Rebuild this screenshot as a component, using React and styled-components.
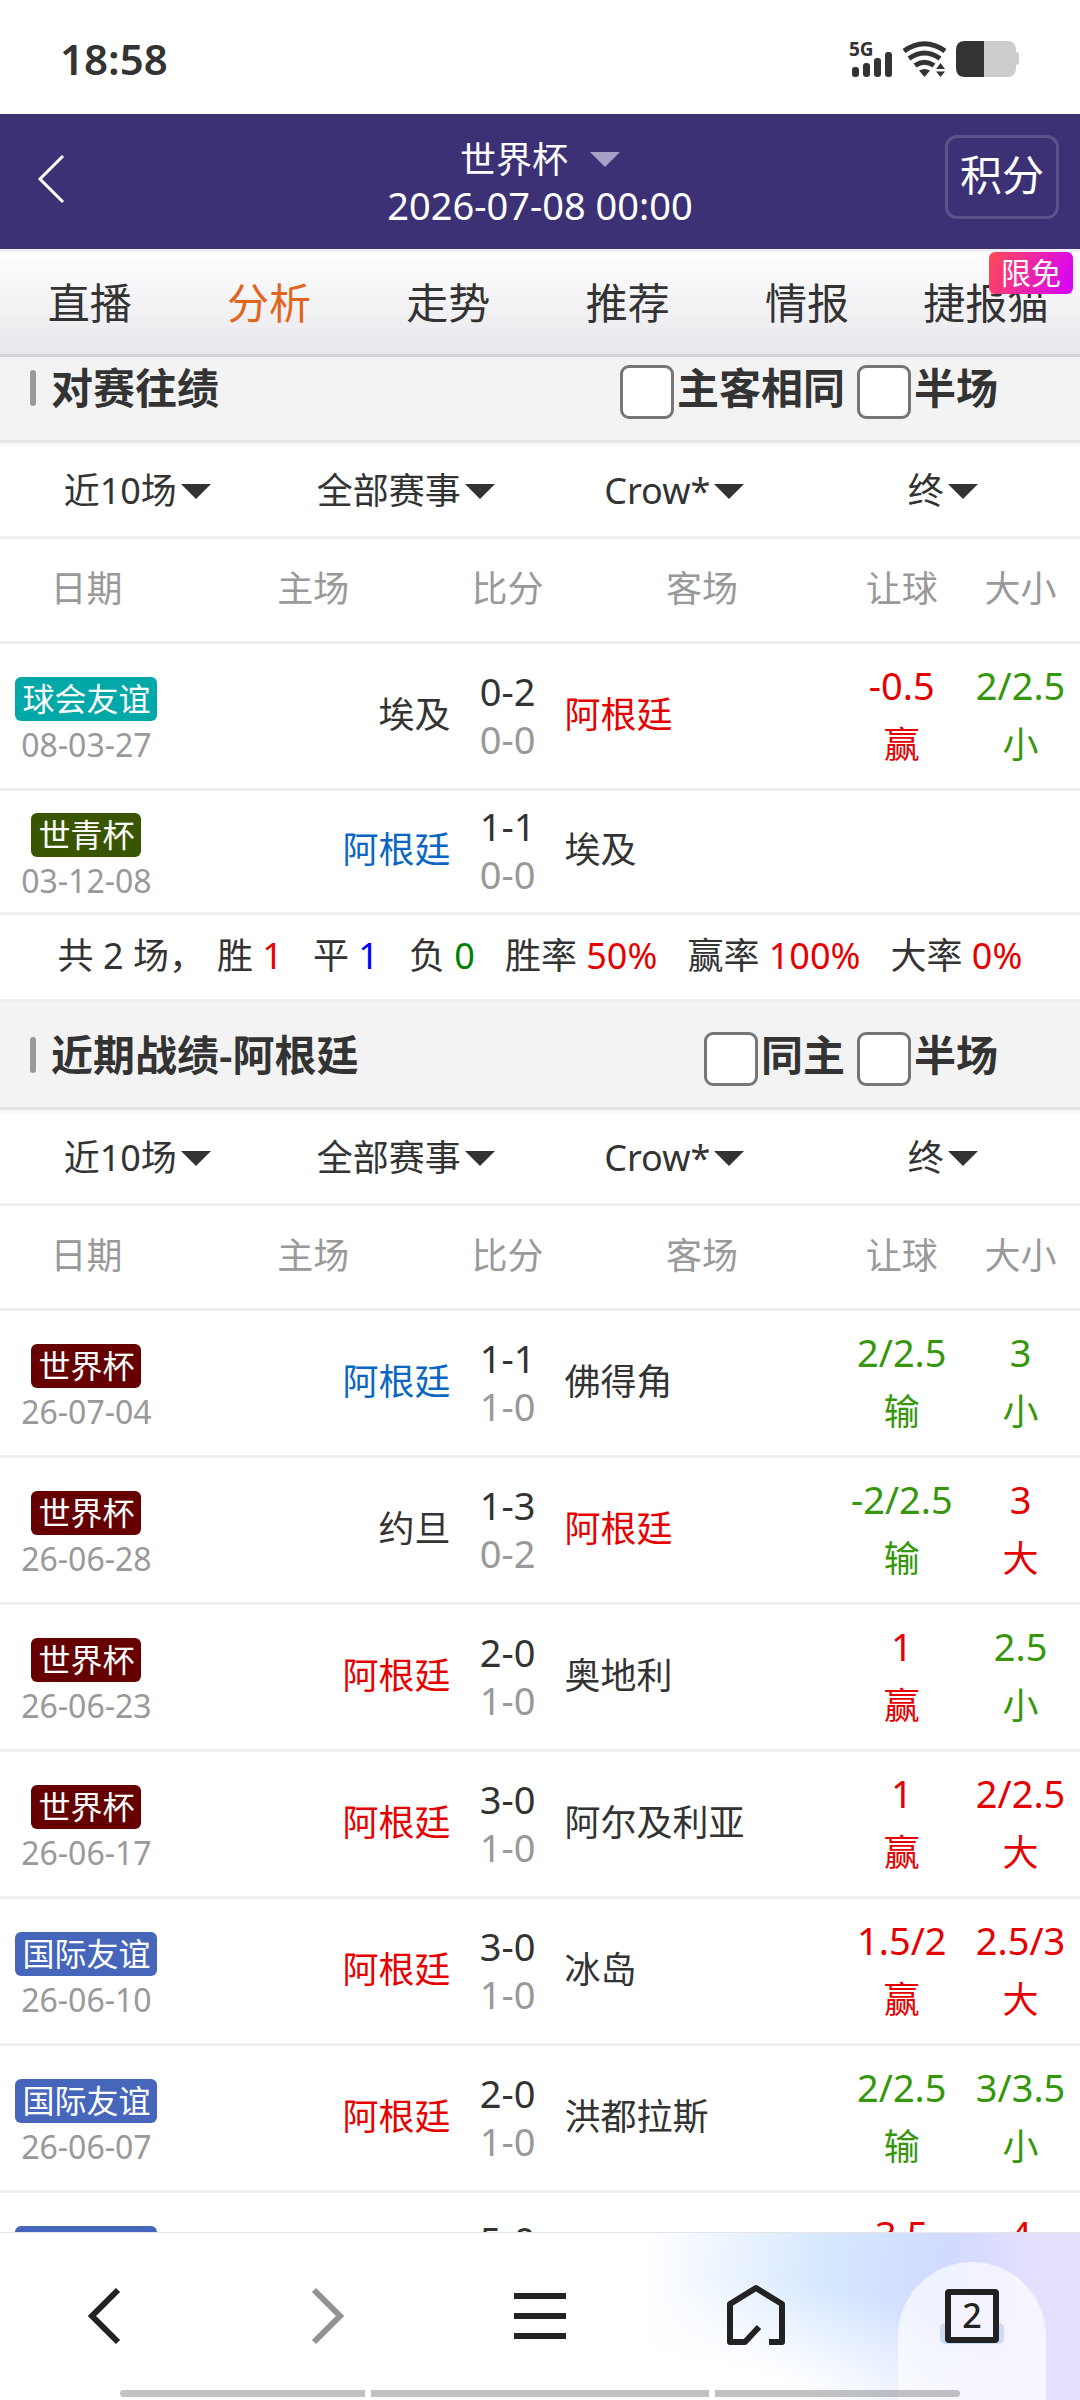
import { Fragment, useState } from "react";
import styled, { createGlobalStyle } from "styled-components";

const GlobalStyle = createGlobalStyle`
  * {
    box-sizing: border-box;
  }
  body {
    margin: 0;
    background-color: white;
    color: #333;
    font-family: "Noto Sans", "Noto Sans CJK SC", sans-serif;
    font-size: 36px;
    line-height: 48px;
  }
  button, select, input {
    margin: 0;
    padding: 0;
    border: none;
    background: none;
    color: inherit;
    font: inherit;
  }
`;

const Page = styled.div`
  height: 100vh;
  display: flex;
  flex-direction: column;
  overflow: hidden;
`;

const StatusBar = styled.div`
  flex: none;
  height: 114px;
  padding: 4px 60px 0px;
  display: flex;
  align-items: center;
  justify-content: space-between;
`;

const Clock = styled.span`
  font-size: 42px;
  font-weight: 600;
`;

const Header = styled.header`
  flex: none;
  height: 135px;
  padding: 0px 21px;
  display: grid;
  grid-template-columns: 1fr auto 1fr;
  align-items: center;
  background-color: #3d3175;
  color: white;
`;

const Back = styled.button`
  display: flex;
  padding: 0px 0px 6px 15px;
`;

const Heading = styled.div`
  padding-top: 2px;
  display: flex;
  flex-direction: column;
  align-items: center;
`;

const League = styled.button`
  display: flex;
  align-items: center;
  gap: 22px;
  line-height: 44px;
`;

const Kickoff = styled.span`
  font-size: 38px;
  line-height: 46px;
`;

const Arrow = styled.i`
  border-left: 15px solid transparent;
  border-right: 15px solid transparent;
  border-top: 15px solid ${(props) => props.$color || "#333"};
`;

const Points = styled.button`
  justify-self: end;
  width: 114px;
  height: 84px;
  margin-bottom: 10px;
  padding-bottom: 4px;
  border: 3px solid rgba(255, 255, 255, 0.16);
  border-radius: 12px;
  font-size: 42px;
  line-height: 60px;
`;

const Tabs = styled.nav`
  flex: none;
  height: 108px;
  padding-right: 4px;
  display: flex;
  border-top: 3px solid #efecf7;
  border-bottom: 3px solid #d3d3d8;
  background: linear-gradient(#fefefe, #e8e7ec);
`;

const Tab = styled.a`
  flex: 1;
  position: relative;
  text-align: center;
  text-decoration: none;
  white-space: nowrap;
  font-size: 42px;
  line-height: 102px;
  color: ${(props) => (props.$active ? "#e0661f" : "#333")};
`;

const Free = styled.span`
  position: absolute;
  top: 0px;
  right: 3px;
  width: 84px;
  border-radius: 6px;
  background: linear-gradient(110deg, #ff4a55, #d600ff);
  color: white;
  font-size: 30px;
  line-height: 42px;
`;

const Content = styled.main`
  flex: 1;
  min-height: 0;
  overflow-y: auto;
  scrollbar-width: none;
`;

const SectionHead = styled.div`
  padding: ${(props) => (props.$scrolled ? "8px" : "30px")} 82px 21px 30px;
  display: flex;
  align-items: flex-start;
  gap: 12px;
  border-bottom: 3px solid #e5e5e5;
  background-color: #f3f3f3;
  font-size: 42px;
  font-weight: 600;
  line-height: 46px;
`;

const Title = styled.h2`
  flex: 1;
  margin: 0px;
  display: flex;
  align-items: center;
  gap: 15px;
  font-size: inherit;
  font-weight: inherit;
  &::before {
    content: "";
    width: 6px;
    height: 36px;
    border-radius: 3px;
    background-color: #999;
  }
`;

const Check = styled.label`
  display: flex;
  gap: 3px;
`;

const Box = styled.input`
  appearance: none;
  width: 54px;
  height: 54px;
  border: 3px solid #767676;
  border-radius: 9px;
  background-color: white;
  &:checked {
    background-color: #3d3175;
  }
`;

const Filters = styled.div`
  height: 96px;
  padding: 0px 3px;
  display: flex;
  border-top: 3px solid #f9f9f9;
  border-bottom: 3px solid #eee;
`;

const Filter = styled.label`
  flex: 1;
  display: flex;
  align-items: center;
  justify-content: center;
  gap: 4px;
`;

const Select = styled.select`
  appearance: none;
  field-sizing: content;
  line-height: 48px;
`;

const Table = styled.table`
  width: 100%;
  table-layout: fixed;
  border-spacing: 0px;
`;

const Row = styled.tr`
  height: ${(props) => props.$height || 147}px;
`;

const Th = styled.th`
  width: ${(props) => props.$width};
  padding: 0px 0px 3px;
  border-bottom: 3px solid #eee;
  color: #999;
  font-weight: normal;
`;

const Td = styled.td`
  padding: 0px 3px 3px;
  border-bottom: 3px solid #eee;
  text-align: ${(props) => props.$align || "center"};
  white-space: nowrap;
`;

const DateCell = styled(Td)`
  padding: 14px 3px 0px;
  color: #999;
  font-size: 32px;
`;

const Tag = styled.span`
  display: block;
  width: fit-content;
  margin: 0px auto;
  padding: 0px 7px;
  border-radius: 6px;
  background-color: ${(props) => props.$color};
  color: white;
  line-height: 44px;
`;

const Team = styled.span`
  color: ${(props) => props.$color};
`;

const Score = styled.div`
  font-size: 38px;
  color: ${(props) => (props.$half ? "#999" : "#333")};
`;

const Odds = styled.div`
  line-height: 60px;
  color: ${(props) => props.$color};
`;

const Line = styled.div`
  font-size: 38px;
`;

const Summary = styled.div`
  height: 87px;
  padding-bottom: 3px;
  display: flex;
  align-items: center;
  justify-content: center;
  gap: 30px;
  border-bottom: 3px solid #eee;
  white-space: nowrap;
`;

// the full-width comma already carries its own space
const Total = styled.span`
  margin-right: -18px;
`;

const Value = styled.span`
  color: ${(props) => props.$color};
`;

const Toolbar = styled.nav`
  flex: none;
  position: relative;
  height: 168px;
  display: flex;
  border-top: 1px solid #e5e5e5;
  background:
    radial-gradient(ellipse 36% 90% at 62% 115%, white 40%, transparent),
    linear-gradient(95deg, white 59%, #d5e7ff 76%, #d1daff 87%, #e6dfff 95%);
`;

const Tool = styled.button`
  flex: 1;
  display: flex;
  align-items: flex-end;
  justify-content: center;
`;

const Windows = styled.span`
  display: flex;
  width: 148px;
  height: 138px;
  border-radius: 74px 74px 0px 0px;
  background-color: rgba(255, 255, 255, 0.65);
`;

const Gesture = styled.div`
  position: absolute;
  bottom: 3px;
  left: 0px;
  right: 0px;
  height: 7px;
  padding: 0px 120px;
  display: flex;
  gap: 6px;
`;

const Segment = styled.i`
  flex: ${(props) => props.$grow};
  border-radius: ${(props) => props.$radius || "0px"};
  background-color: rgba(150, 150, 150, 0.58);
`;

const RED = "#e60000";
const GREEN = "#36960c";
const BLUE = "#0a66c2";

const tabs = ["直播", "分析", "走势", "推荐", "情报", "捷报猫"];

const filters = [
  ["场次", ["近10场", "近20场"]],
  ["赛事", ["全部赛事", "相同赛事"]],
  ["公司", ["Crow*", "Bet*"]],
  ["盘口", ["终", "初"]],
];

const columns = [
  ["日期", "16%"],
  ["主场", "26%"],
  ["比分", "10%"],
  ["客场", "26%"],
  ["让球", "11%"],
  ["大小", "11%"],
];

const meetings = [
  { tag: "球会友谊", bg: "#00a8a8", date: "08-03-27", home: "埃及", full: "0-2", half: "0-0", away: "阿根廷", awayColor: RED, odds: [["-0.5", "赢", RED], ["2/2.5", "小", GREEN]] },
  { tag: "世青杯", bg: "#3a5500", date: "03-12-08", home: "阿根廷", homeColor: BLUE, full: "1-1", half: "0-0", away: "埃及", height: 124 },
];

const recent = [
  { tag: "世界杯", bg: "#660000", date: "26-07-04", home: "阿根廷", homeColor: BLUE, full: "1-1", half: "1-0", away: "佛得角", odds: [["2/2.5", "输", GREEN], ["3", "小", GREEN]] },
  { tag: "世界杯", bg: "#660000", date: "26-06-28", home: "约旦", full: "1-3", half: "0-2", away: "阿根廷", awayColor: RED, odds: [["-2/2.5", "输", GREEN], ["3", "大", RED]] },
  { tag: "世界杯", bg: "#660000", date: "26-06-23", home: "阿根廷", homeColor: RED, full: "2-0", half: "1-0", away: "奥地利", odds: [["1", "赢", RED], ["2.5", "小", GREEN]] },
  { tag: "世界杯", bg: "#660000", date: "26-06-17", home: "阿根廷", homeColor: RED, full: "3-0", half: "1-0", away: "阿尔及利亚", odds: [["1", "赢", RED], ["2/2.5", "大", RED]] },
  { tag: "国际友谊", bg: "#4666bb", date: "26-06-10", home: "阿根廷", homeColor: RED, full: "3-0", half: "1-0", away: "冰岛", odds: [["1.5/2", "赢", RED], ["2.5/3", "大", RED]] },
  { tag: "国际友谊", bg: "#4666bb", date: "26-06-07", home: "阿根廷", homeColor: RED, full: "2-0", half: "1-0", away: "洪都拉斯", odds: [["2/2.5", "输", GREEN], ["3/3.5", "小", GREEN]] },
  { tag: "国际友谊", bg: "#4666bb", date: "26-04-01", home: "阿根廷", homeColor: RED, full: "5-0", half: "2-0", away: "赞比亚", odds: [["3.5", "赢", RED], ["4", "大", RED]] },
];

const summary = [
  ["胜", "1", RED],
  ["平", "1", "#0000ff"],
  ["负", "0", "#008000"],
  ["胜率", "50%", RED],
  ["赢率", "100%", RED],
  ["大率", "0%", RED],
];

const StatusIcons = () => (
  <svg width="173" height="40" viewBox="848 40 173 40" fill="#333">
    <text x="850" y="57" fontSize="19" fontWeight="700">5G</text>
    <rect x="853" y="68" width="7" height="10" rx="3" />
    <rect x="864" y="64" width="7" height="14" rx="3" />
    <rect x="875" y="59" width="7" height="19" rx="3" />
    <rect x="886" y="53" width="7" height="25" rx="3" />
    <g fill="none" stroke="#333" strokeWidth="5">
      <path d="M905 52 Q925.500 37.500 946 52" />
      <path d="M910 59.500 Q925.500 48.500 941 59.500" />
      <path d="M916 66.500 Q925.500 60 935 66.500" />
    </g>
    <path d="M920 71.500 Q925.500 68.500 931 71.500 L925.500 78Z" />
    <path d="M937 70 L941.500 64 L946 70Z M937 72.500 L941.500 78 L946 72.500Z" />
    <path fill="#ccc" d="M985 42h23q9 0 9 9v2q3 0 3 3v7q0 3-3 3v3q0 9-9 9h-23z" />
    <path d="M985 42h-19q-9 0-9 9v18q0 9 9 9h19z" />
  </svg>
);

const Section = ({ title, checks, matches, scrolled, children }) => {
  return (
    <section>
      <SectionHead $scrolled={scrolled}>
        <Title>{title}</Title>
        {checks.map((text) => (
          <Check key={text}>
            <Box type="checkbox" />
            {text}
          </Check>
        ))}
      </SectionHead>
      <Filters>
        {filters.map(([name, options]) => (
          <Filter key={name}>
            <Select aria-label={name}>
              {options.map((option) => (
                <option key={option}>{option}</option>
              ))}
            </Select>
            <Arrow />
          </Filter>
        ))}
      </Filters>
      <Table>
        <thead>
          <Row $height={105}>
            {columns.map(([name, width]) => (
              <Th key={name} $width={width}>{name}</Th>
            ))}
          </Row>
        </thead>
        <tbody>
          {matches.map((match) => (
            <Row key={match.date} $height={match.height}>
              <DateCell>
                <Tag $color={match.bg}>{match.tag}</Tag>
                {match.date}
              </DateCell>
              <Td $align="right">
                <Team $color={match.homeColor}>{match.home}</Team>
              </Td>
              <Td>
                <Score>{match.full}</Score>
                <Score $half>{match.half}</Score>
              </Td>
              <Td $align="left">
                <Team $color={match.awayColor}>{match.away}</Team>
              </Td>
              {match.odds ? (
                match.odds.map(([line, result, color], i) => (
                  <Td key={i}>
                    <Odds $color={color}>
                      <Line>{line}</Line>
                      {result}
                    </Odds>
                  </Td>
                ))
              ) : (
                <Fragment>
                  <Td />
                  <Td />
                </Fragment>
              )}
            </Row>
          ))}
        </tbody>
      </Table>
      {children}
    </section>
  );
};

const App = () => {
  const [active, setActive] = useState("分析");

  return (
    <Page>
      <GlobalStyle />
      <StatusBar>
        <Clock>18:58</Clock>
        <StatusIcons />
      </StatusBar>
      <Header>
        <Back aria-label="返回">
          <svg width="30" height="50" fill="none" stroke="white" strokeWidth="3">
            <path d="M27 2 L4 25 L27 48" />
          </svg>
        </Back>
        <Heading>
          <League>
            世界杯
            <Arrow $color="#a8a0c8" />
          </League>
          <Kickoff>2026-07-08 00:00</Kickoff>
        </Heading>
        <Points>积分</Points>
      </Header>
      <Tabs>
        {tabs.map((name) => (
          <Tab key={name} href="#" $active={name === active} onClick={() => setActive(name)}>
            {name}
            {name === "捷报猫" && <Free>限免</Free>}
          </Tab>
        ))}
      </Tabs>
      <Content>
        <Section title="对赛往绩" checks={["主客相同", "半场"]} matches={meetings} scrolled>
          <Summary>
            <Total>共 2 场，</Total>
            {summary.map(([name, value, color]) => (
              <span key={name}>
                {name} <Value $color={color}>{value}</Value>
              </span>
            ))}
          </Summary>
        </Section>
        <Section title="近期战绩-阿根廷" checks={["同主", "半场"]} matches={recent} />
      </Content>
      <Toolbar>
        <Tool aria-label="后退">
          <svg width="148" height="138" fill="none" stroke="#222" strokeWidth="6">
            <path d="M84 28 L58 54 L84 80" />
          </svg>
        </Tool>
        <Tool aria-label="前进">
          <svg width="148" height="138" fill="none" stroke="#929292" strokeWidth="6">
            <path d="M64 28 L90 54 L64 80" />
          </svg>
        </Tool>
        <Tool aria-label="菜单">
          <svg width="148" height="138" stroke="#222" strokeWidth="6">
            <path d="M48 34H100M48 54H100M48 74H100" />
          </svg>
        </Tool>
        <Tool aria-label="主页">
          <svg width="148" height="138" fill="none" stroke="#222" strokeWidth="6" strokeLinejoin="round">
            <path d="M77 65 L63 80 H48 V42 L74 26 L100 42 V80 H87" />
          </svg>
        </Tool>
        <Tool aria-label="窗口">
          <Windows>
            <svg width="148" height="138">
              <rect x="42" y="61" width="64" height="21" rx="5" fill="#ccdaf2" />
              <rect x="50" y="30" width="48" height="48" rx="1" fill="#f5f3fe" stroke="#222" strokeWidth="6" />
              <text x="74" y="66" textAnchor="middle" fontSize="34" fontWeight="500" fill="#222">2</text>
            </svg>
          </Windows>
        </Tool>
        <Gesture>
          <Segment $grow={245} $radius="4px 0px 0px 4px" />
          <Segment $grow={338} />
          <Segment $grow={245} $radius="0px 4px 4px 0px" />
        </Gesture>
      </Toolbar>
    </Page>
  );
};

export default App;
